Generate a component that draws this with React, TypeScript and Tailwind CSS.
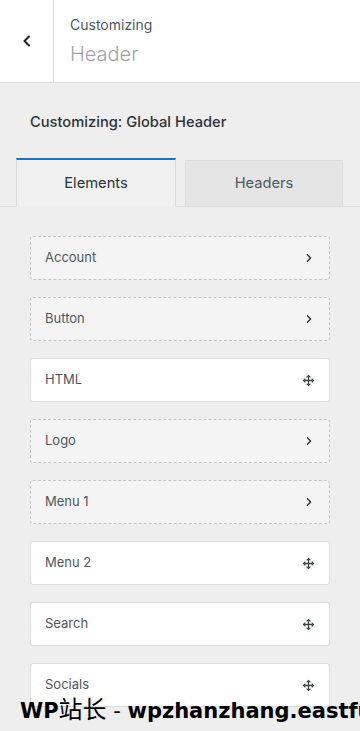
import React from "react";

const items = [
  { label: "Account", type: "dashed" },
  { label: "Button", type: "dashed" },
  { label: "HTML", type: "solid" },
  { label: "Logo", type: "dashed" },
  { label: "Menu 1", type: "dashed" },
  { label: "Menu 2", type: "solid" },
  { label: "Search", type: "solid" },
  { label: "Socials", type: "solid" },
];

function Chevron() {
  return (
    <svg width="10" height="10" viewBox="0 0 10 10" fill="none">
      <path d="M3.4 1.7 L6.6 5 L3.4 8.3" stroke="#2c3338" strokeWidth="1.4" strokeLinecap="round" strokeLinejoin="round" />
    </svg>
  );
}

function MoveIcon() {
  return (
    <svg width="13" height="13" viewBox="0 0 20 20" fill="#3c434a">
      <path d="M19 10l-4 4v-3h-4v4h3l-4 4-4-4h3v-4H5v3l-4-4 4-4v3h4V5H6l4-4 4 4h-3v4h4V6z" />
    </svg>
  );
}

export default function App() {
  return (
    <div
      className="relative w-[360px] h-[731px] overflow-hidden bg-[#eeeeee]"
      style={{ fontFamily: "Inter, Roboto, 'Noto Sans', sans-serif" }}
    >
      <div className="flex h-[83px] bg-white border-b border-[#dcdcde]">
        <div className="w-[54px] border-r border-[#dcdcde] flex items-center justify-center">
          <svg width="14" height="14" viewBox="0 0 14 14" fill="none">
            <path d="M9 2.5 L4.5 7 L9 11.5" stroke="#1d2327" strokeWidth="2" strokeLinecap="round" strokeLinejoin="round" />
          </svg>
        </div>
        <div className="pl-[16px] pt-[15px] flex flex-col">
          <div className="text-[14px] leading-[20px] text-[#50575e]">Customizing</div>
          <div className="text-[20px] leading-[28px] font-light text-[#a0a5aa] mt-[5px]">Header</div>
        </div>
      </div>

      <div className="pt-[30px] pl-[30px] text-[14.7px] leading-[18px] font-medium text-[#2c3338]">
        Customizing: Global Header
      </div>

      <div className="mt-[27px] flex border-b border-[#dcdcde] pl-[16px] pr-[17px] gap-[9px]">
        <div className="w-[160px] h-[49px] -mb-px border-t-2 border-t-[#2271b1] border-x border-x-[#dcdcde] bg-[#f0f0f0] flex items-center justify-center text-[14.7px] text-[#2c3338]">
          Elements
        </div>
        <div className="flex-1 h-[46px] mt-[2px] border border-[#dcdcde] border-b-0 bg-[#e5e5e5] flex items-center justify-center text-[14.7px] text-[#50575e]">
          Headers
        </div>
      </div>

      <div className="px-[30px] pt-[29px] flex flex-col gap-[17px]">
        {items.map((it) => (
          <div
            key={it.label}
            className={
              it.type === "dashed"
                ? "h-[44px] rounded-[3px] border border-dashed border-[#c3c4c7] bg-[#f4f4f4] flex items-center justify-between pl-[14px] pr-[15px]"
                : "h-[44px] rounded-[3px] border border-[#dcdcde] bg-white flex items-center justify-between pl-[14px] pr-[14px]"
            }
          >
            <span className="text-[13px] text-[#50575e]">{it.label}</span>
            {it.type === "dashed" ? <Chevron /> : <MoveIcon />}
          </div>
        ))}
      </div>

      <div
        className="absolute left-[20px] top-[694px] whitespace-nowrap text-[21px] font-bold text-black leading-[28px]"
        style={{ fontFamily: "'DejaVu Sans', 'Noto Sans CJK SC', sans-serif" }}
      >
        WP<span className="font-normal text-[24px]" style={{ fontFamily: "'Noto Sans CJK SC', sans-serif" }}>站长</span><span className="font-normal"> - </span>wpzhanzhang.eastfu
      </div>
    </div>
  );
}
